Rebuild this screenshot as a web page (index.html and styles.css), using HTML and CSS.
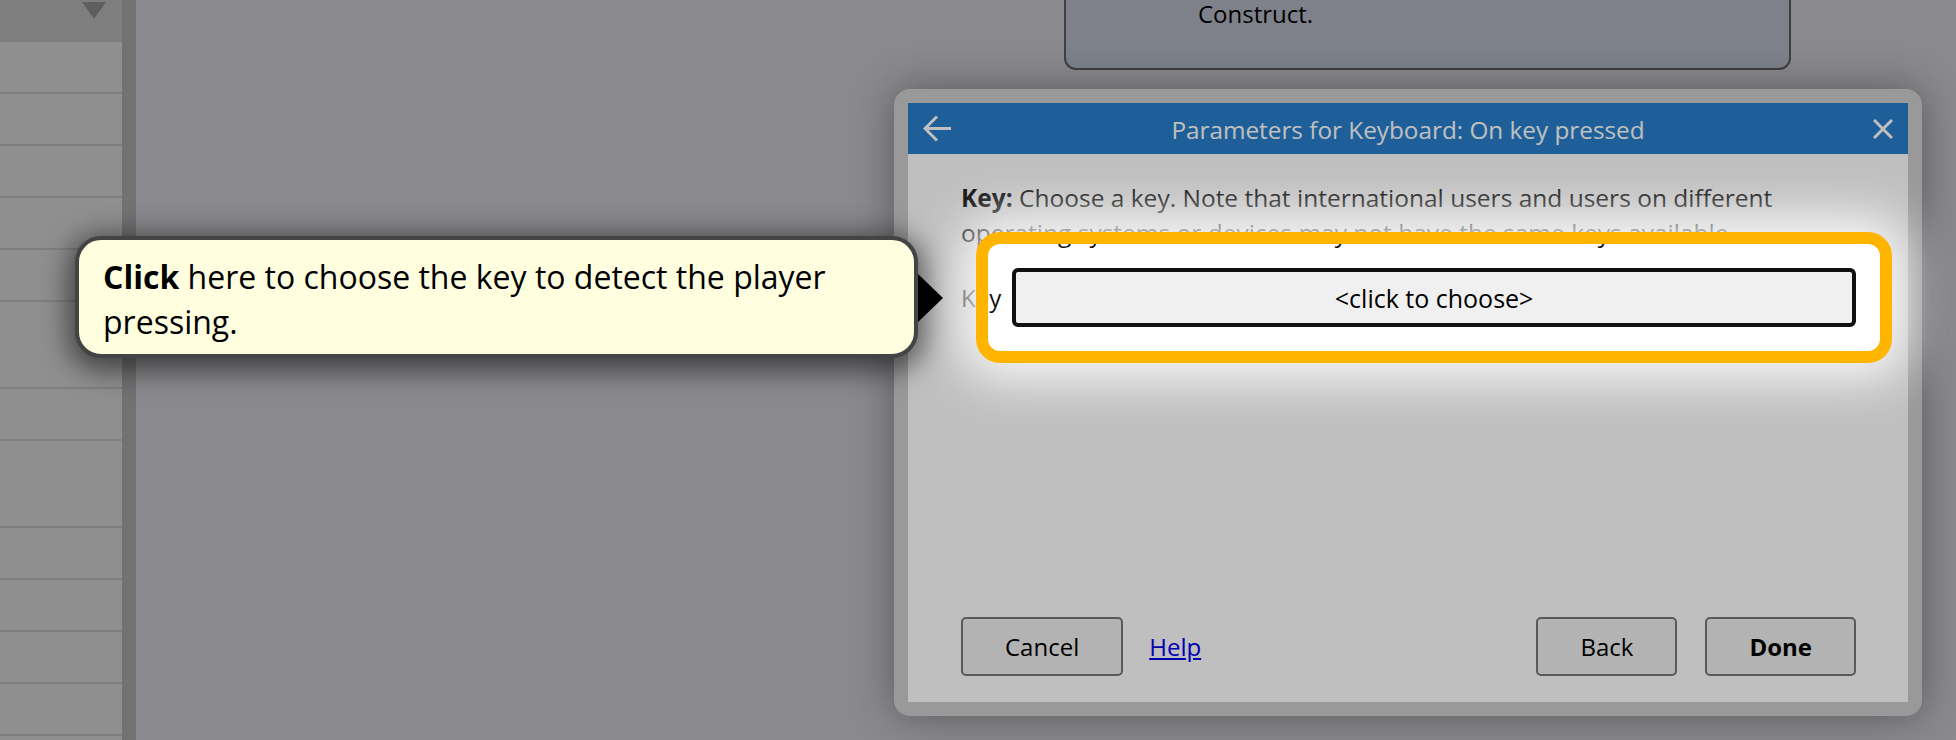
FILE: index.html
```html
<!DOCTYPE html>
<html lang="en">
<head>
<meta charset="utf-8">
<title>Parameters for Keyboard: On key pressed</title>
<link rel="stylesheet" href="styles.css">
</head>
<body>
<div class="app">
  <aside class="sidebar">
    <div class="sb-head"><span class="sb-caret"></span></div>
    <div class="sb-row"></div>
    <div class="sb-row"></div>
    <div class="sb-row"></div>
    <div class="sb-row"></div>
    <div class="sb-row"></div>
    <div class="sb-row tall"></div>
    <div class="sb-row"></div>
    <div class="sb-row tall"></div>
    <div class="sb-row"></div>
    <div class="sb-row"></div>
    <div class="sb-row"></div>
    <div class="sb-row"></div>
  </aside>
  <div class="gutter"></div>
  <main class="sheet">
    <div class="comment">Construct.</div>
  </main>
</div>

<div class="dialog">
  <div class="dlg-title">
    <svg class="ico-back" width="28" height="27" viewBox="0 0 28 27" aria-hidden="true">
      <path d="M28 13.5 H2.5 M14 1.5 L2 13.5 L14 25.5" fill="none" stroke="#fff" stroke-width="3"/>
    </svg>
    <span class="dlg-caption">Parameters for Keyboard: On key pressed</span>
    <svg class="ico-close" width="20" height="20" viewBox="0 0 20 20" aria-hidden="true">
      <path d="M1 1 L19 19 M19 1 L1 19" fill="none" stroke="#fff" stroke-width="3"/>
    </svg>
  </div>
  <div class="dlg-body">
    <p class="desc"><b>Key:</b> Choose a key. Note that international users and users on different operating systems or devices may not have the same keys available.</p>
    <div class="param-row">
      <label class="param-label">Key</label>
      <div class="key-wrap">
        <button class="key-btn">&lt;click to choose&gt;</button>
        <div class="spotlight"></div>
      </div>
    </div>
    <div class="dlg-foot">
      <button class="btn">Cancel</button>
      <a class="help" href="#">Help</a>
      <span class="spacer"></span>
      <button class="btn">Back</button>
      <button class="btn primary">Done</button>
    </div>
  </div>
</div>

<div class="tip">
  <b>Click</b> here to choose the key to detect the player pressing.
  <span class="tip-arrow"></span>
</div>
</body>
</html>
```

FILE: styles.css
```css
html, body {
  margin: 0;
  padding: 0;
}
body {
  width: 1956px;
  height: 740px;
  overflow: hidden;
  font-family: "Open Sans", "Noto Sans", sans-serif;
  color: #000;
  position: relative;
}

.app {
  display: flex;
  height: 740px;
}

.sidebar {
  width: 122px;
  background: #bfbfbf;
  display: flex;
  flex-direction: column;
}
.sb-head {
  height: 42px;
  background: #a9a9a9;
  position: relative;
  flex: none;
}
.sb-caret {
  position: absolute;
  left: 82px;
  top: 2px;
  width: 0;
  height: 0;
  border-left: 12px solid transparent;
  border-right: 12px solid transparent;
  border-top: 17px solid #7f7f7f;
}
.sb-row {
  height: 52px;
  flex: none;
  box-sizing: border-box;
  border-bottom: 2px solid #aaaaaa;
}
.sb-row.tall {
  height: 87px;
}

.gutter {
  width: 14px;
  background: #999999;
}

.sheet {
  flex: 1;
  background: #b8b7bd;
  overflow: hidden;
}
.comment {
  margin-top: -30px;
  margin-left: 928px;
  width: 727px;
  height: 100px;
  box-sizing: border-box;
  border: 2px solid #555;
  border-radius: 12px;
  background: #a8adb9;
  padding: 25px 0 0 132px;
  font-size: 24px;
  line-height: 34px;
}

/* dialog */
.dialog {
  position: absolute;
  left: 894px;
  top: 89px;
  width: 1028px;
  height: 627px;
  box-sizing: border-box;
  padding: 14px;
  background: #cccccc;
  border-radius: 16px;
  box-shadow: 0 0 40px rgba(0, 0, 0, 0.35);
  display: flex;
  flex-direction: column;
}
.dlg-title {
  height: 51px;
  flex: none;
  background: #297fcc;
  color: #fff;
  display: grid;
  grid-template-columns: 1fr auto 1fr;
  align-items: center;
  padding: 0 15px;
}
.ico-back { justify-self: start; display: block; }
.ico-close { justify-self: end; display: block; }
.dlg-caption {
  font-size: 24.3px;
  white-space: nowrap;
  padding-top: 2px;
}

.dlg-body {
  flex: 1;
  background: #fff;
  padding: 26px 52px 26px 53px;
  display: flex;
  flex-direction: column;
  font-size: 24px;
  color: #111;
}
.desc {
  margin: 0;
  font-size: 24.5px;
  line-height: 35px;
}
.param-row {
  margin-top: 18px;
  display: flex;
  align-items: center;
  gap: 11px;
}
.param-label {
  font-size: 24px;
  color: #111;
}
.key-wrap {
  flex: 1;
  position: relative;
}
.key-btn {
  display: block;
  width: 100%;
  height: 59px;
  box-sizing: border-box;
  border: 4px solid #111;
  border-radius: 6px;
  background: #f0f0f0;
  font-family: inherit;
  font-size: 25px;
  color: #000;
  padding: 0;
}
.spotlight {
  position: absolute;
  inset: -36px -36px -36px -36px;
  border: 12px solid #ffb400;
  border-radius: 24px;
  box-shadow: 0 0 50px 16px rgba(255, 255, 255, 0.9), 0 0 0 4000px rgba(0, 0, 0, 0.25);
  z-index: 10;
  pointer-events: none;
}

.dlg-foot {
  margin-top: auto;
  display: flex;
  align-items: center;
}
.btn {
  height: 59px;
  box-sizing: border-box;
  padding: 0 42px;
  border: 2px solid #787878;
  border-radius: 5px;
  background: #efefef;
  font-family: inherit;
  font-size: 24px;
  color: #000;
}
.btn.primary {
  font-weight: bold;
  margin-left: 28px;
}
.help {
  margin-left: 26px;
  color: #0000ee;
  text-decoration: underline;
}
.spacer { flex: 1; }

/* tooltip */
.tip {
  position: absolute;
  left: 75px;
  top: 236px;
  width: 843px;
  height: 122px;
  box-sizing: border-box;
  border: 4px solid #444;
  border-radius: 26px;
  background: #ffffe0;
  padding: 14px 24px 0;
  font-size: 32px;
  line-height: 45px;
  color: #000;
  box-shadow: 0 6px 28px 6px rgba(0, 0, 0, 0.55);
  z-index: 20;
}
.tip-arrow {
  position: absolute;
  left: calc(100% + 4px);
  top: 34px;
  width: 0;
  height: 0;
  border-left: 25px solid #000;
  border-top: 24px solid transparent;
  border-bottom: 24px solid transparent;
}
```
